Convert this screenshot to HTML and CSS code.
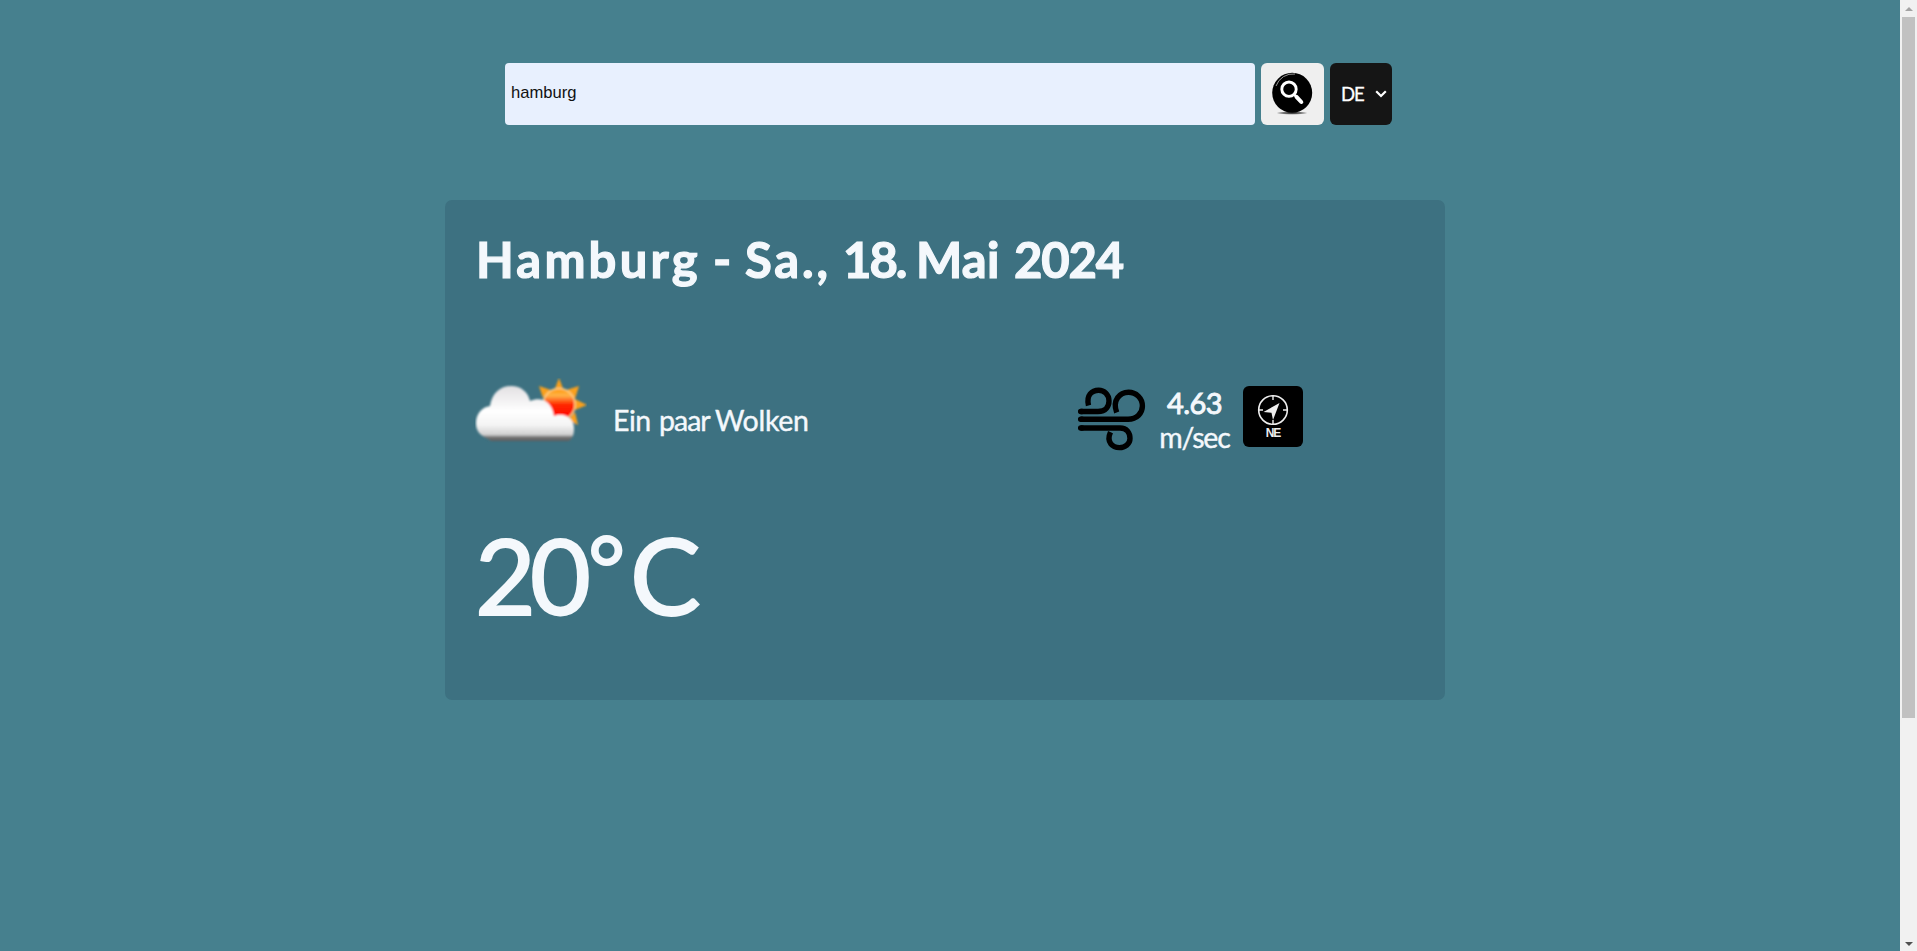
FILE: index.html
```html
<!DOCTYPE html>
<html lang="de">
<head>
<meta charset="utf-8">
<title>Wetter</title>
<link rel="stylesheet" href="styles.css">
</head>
<body>
<div class="page">
  <main class="content">
    <form class="search">
      <div class="search-input"><span>hamburg</span></div>
      <div class="search-btn">
        <svg width="42" height="44" viewBox="0 0 42 44">
          <defs><radialGradient id="shadow"><stop offset="0" stop-color="#222"/><stop offset=".6" stop-color="#777"/><stop offset="1" stop-color="#efefef"/></radialGradient></defs>
          <ellipse cx="20" cy="41" rx="16" ry="1.8" fill="url(#shadow)"/>
          <circle cx="20.2" cy="20.8" r="20" fill="#000"/>
          <path d="M4 14A18 18 0 0 1 23 2" fill="none" stroke="#999" stroke-width="1"/>
          <circle cx="17" cy="17.2" r="7.2" fill="none" stroke="#fff" stroke-width="2.9"/>
          <path d="M22 22.3l2.5 2.5" stroke="#fff" stroke-width="2.5"/>
          <path d="M24.5 24.8l4.8 5.2" stroke="#fff" stroke-width="4" stroke-linecap="round"/>
        </svg>
      </div>
      <div class="lang"><span>DE</span>
        <svg width="12" height="8" viewBox="0 0 12 8"><path d="M1.2 1.2L6 6L10.8 1.2" fill="none" stroke="#fff" stroke-width="2.2"/></svg>
      </div>
    </form>
    <section class="card">
      <h1 class="title"><span class="w-city">Hamburg</span><span class="w-dash">-</span><span class="w-wday">Sa.,</span><span class="w-day">18.</span><span class="w-month">Mai</span><span class="w-year">2024</span></h1>
      <div class="row">
        <svg class="sky" width="112" height="66" viewBox="0 0 112 66">
          <defs>
            <linearGradient id="cloud" x1="0" y1="8" x2="0" y2="64" gradientUnits="userSpaceOnUse"><stop offset="0" stop-color="#e2e0e2"/><stop offset=".45" stop-color="#fff"/><stop offset=".7" stop-color="#f4f4f4"/><stop offset=".87" stop-color="#cfcfcf"/><stop offset=".91" stop-color="#777"/><stop offset="1" stop-color="#555"/></linearGradient>
            <linearGradient id="sun" x1="0" y1="12" x2="0" y2="40" gradientUnits="userSpaceOnUse"><stop offset="0" stop-color="#ff9d16"/><stop offset=".2" stop-color="#ffb347"/><stop offset=".52" stop-color="#ff2900"/><stop offset="1" stop-color="#f00"/></linearGradient>
            <filter id="soft"><feGaussianBlur stdDeviation=".8"/></filter>
          </defs>
          <g filter="url(#soft)">
            <path d="M79 13L84 0L89 13ZM64 8L76 12L68 20ZM104 8L100 21L91 12ZM100 21L112 27L100 32ZM100 34L103 47L93 42Z" fill="#f9a01b"/>
            <circle cx="84" cy="26.5" r="16" fill="url(#sun)" stroke="#ffd28a" stroke-width="1.5"/>
            <path d="M13 61C4 57 1 52 1 45C1 36 7 29 15 28C17 15 25 8 36 8C46 8 53 14 55 23C67 18 77 24 79 38C90 34 99 41 99 50C99 56 98 60 94 63H16Z" fill="url(#cloud)"/>
          </g>
        </svg>
        <span class="desc"><span class="w-ein">Ein</span><span class="w-paar">paar</span><span class="w-wolken">Wolken</span></span>
        <div class="wind">
          <svg width="68" height="64" viewBox="0 0 68 64" fill="none" stroke="#000" stroke-width="5.4">
            <path d="M2.6 24.5H20C28 24.5 31 19 31 14C31 7.5 26 3.2 20.7 3.2C14 3.2 8 8 10.5 18.5M2.6 32.3H50C59 32.3 64.4 26 64.4 19C64.4 11 58 5.2 50.5 5.2C42 5.2 34 13 38.7 25.5M2.6 41H42C49 41 52 46 52 51.5C52 57 47 60.6 41.5 60.6C34.5 60.6 28 55 32.5 45.2"/>
            <path d="M2.6 24.5H4M2.6 32.3H4M2.6 41H4" stroke-linecap="round"/>
          </svg>
          <div class="speed"><span class="num">4.63</span><span class="unit">m/sec</span></div>
          <div class="compass">
            <svg width="32" height="32" viewBox="0 0 32 32"><circle cx="16" cy="16" r="14.3" fill="none" stroke="#eee" stroke-width="1.6"/><path d="M16 1v5M16 26v5M1 16h5M26 16h5" stroke="#eee" stroke-width="1.4"/><path d="M22.5 9L6.5 18L14.5 18.8L16 26Z" fill="#eee"/></svg>
            <span>NE</span>
          </div>
        </div>
      </div>
      <div class="temp"><span class="t-num">20</span><span class="t-deg">°</span><span class="t-unit">C</span></div>
    </section>
  </main>
  <div class="scrollbar"><i class="up"></i><i class="thumb"></i><i class="down"></i></div>
</div>
</body>
</html>
```
FILE: styles.css
```css
* { box-sizing: border-box; }
body { margin: 0; background: #46808e; font-family: Lato, sans-serif; color: #f4f8fc; overflow: hidden; }
.page { display: flex; height: 951px; }
.content { flex: 1; padding: 63px 0 0 445px; }
.search { display: flex; gap: 6px; margin: 0 0 75px 60px; height: 62px; }
.search-input { width: 750px; background: #e8f0fe; border-radius: 4px; padding: 0 0 2px 6px; display: flex; align-items: center; color: #111; font: 16.6px "Liberation Sans", sans-serif; }
.search-btn { width: 63px; background: #efefef; border-radius: 6px; display: flex; align-items: center; justify-content: center; }
.lang { width: 62px; background: #151515; border-radius: 6px; display: flex; align-items: center; padding: 0 5px 0 11px; justify-content: space-between; font-size: 18.5px; color: #fff; letter-spacing: -1px; -webkit-text-stroke: .3px; }
.card { width: 1000px; height: 500px; background: #3d7181; border-radius: 7px; padding: 29px 30px 0; }
.title { margin: 0; height: 60px; font-size: 49px; line-height: 60px; font-weight: 700; white-space: nowrap; display: flex; padding-left: 1px; -webkit-text-stroke: 1.2px; }
.w-city { width: 237px; letter-spacing: 3.2px; }
.w-dash { width: 32px; }
.w-wday { width: 98px; letter-spacing: 2.8px; }
.w-day { width: 73px; letter-spacing: -2px; }
.w-month { width: 98px; letter-spacing: .2px; }
.w-year { letter-spacing: -1.2px; }
.row { display: flex; height: 90px; margin-top: 87px; }
.sky { margin-top: 2px; }
.desc { display: flex; width: 491px; padding: 25px 0 0 26px; font-size: 28.5px; line-height: 38px; white-space: nowrap; -webkit-text-stroke: .4px; }
.w-ein { width: 46px; letter-spacing: -.5px; }
.w-paar { width: 56px; letter-spacing: -1px; }
.w-wolken { letter-spacing: -.3px; }
.wind { display: flex; padding-top: 11px; }
.speed { width: 97px; display: flex; flex-direction: column; align-items: center; font-size: 28.5px; line-height: 35px; margin-top: -2px; -webkit-text-stroke: .4px; }
.num { font-size: 29px; letter-spacing: -.6px; -webkit-text-stroke: .9px; }
.unit { letter-spacing: -1.2px; }
.compass { width: 60px; height: 61px; margin-top: -1px; background: #000; border-radius: 6px; display: flex; flex-direction: column; align-items: center; padding-top: 8px; }
.compass span { font: 700 12px/14px "Liberation Sans", sans-serif; letter-spacing: -1.2px; color: #eee; }
.temp { display: flex; align-items: baseline; margin-top: 43px; font-size: 105px; line-height: 130px; -webkit-text-stroke: 2px; }
.t-num { width: 113px; letter-spacing: -6px; }
.t-deg { width: 42px; font-size: 90px; position: relative; top: -14px; }
.t-unit { font-size: 106px; letter-spacing: 0; }
.scrollbar { width: 17px; background: #f1f1f1; display: flex; flex-direction: column; align-items: center; }
.up { border: 4px solid transparent; border-top: 0; border-bottom: 4px solid #a3a3a3; margin: 7px 0 6px; }
.thumb { width: 13px; height: 701px; background: #c1c1c1; }
.down { border: 4px solid transparent; border-bottom: 0; border-top: 4px solid #505050; margin-top: auto; margin-bottom: 5px; }
```
